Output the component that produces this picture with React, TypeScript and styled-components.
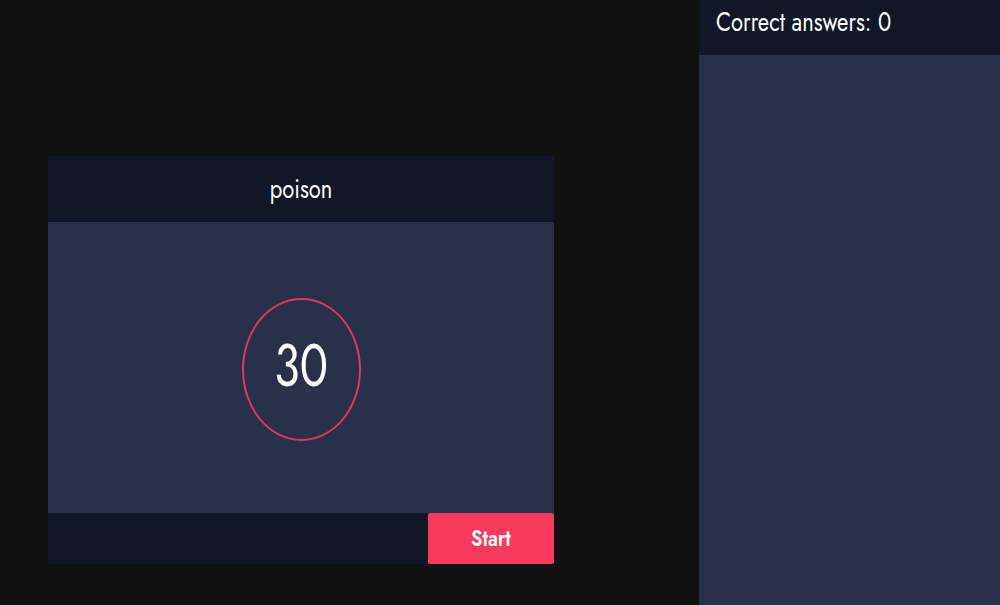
import React from "react";
import styled, { createGlobalStyle } from "styled-components";

const Global = createGlobalStyle`
  html, body { margin: 0; padding: 0; background: #111111; }
  body { font-family: "Jost", "Lato", "Liberation Sans", sans-serif; }
  * { box-sizing: border-box; }
`;

const Page = styled.div`
  display: flex;
  width: 1000px;
  height: 605px;
  background: #111111;
  overflow: hidden;
`;

const Main = styled.div`
  width: 699px;
  padding: 156px 145px 0 48px;
`;

const Card = styled.div`
  display: flex;
  flex-direction: column;
  width: 506px;
`;

const Tall = styled.span`
  display: inline-block;
  transform: scaleY(1.25);
  line-height: 1;
`;

const CardHeader = styled.div`
  height: 66px;
  background: #121728;
  color: #ffffff;
  display: flex;
  align-items: center;
  justify-content: center;
  font-size: 22px;
  padding-bottom: 2px;
`;

const CardBody = styled.div`
  height: 291px;
  background: #29304a;
  display: flex;
  align-items: center;
  justify-content: center;
  padding-top: 4px;
`;

const Timer = styled.div`
  width: 119px;
  height: 143px;
  border: 2px solid #e1385c;
  border-radius: 50%;
  display: flex;
  align-items: center;
  justify-content: center;
  color: #ffffff;
  font-size: 47px;
  font-weight: 400;
  padding-bottom: 6px;
`;

const CardFooter = styled.div`
  height: 51px;
  display: flex;
  background: #121728;
`;

const Input = styled.input`
  flex: 1;
  background: transparent;
  border: none;
  outline: none;
  color: #fff;
  font-family: inherit;
  font-size: 18px;
  padding: 0 16px;
`;

const StartButton = styled.button`
  width: 126px;
  height: 51px;
  border: none;
  border-radius: 2px;
  background: #f8385c;
  color: #ffffff;
  font-family: inherit;
  font-size: 19px;
  font-weight: 600;
  cursor: pointer;
  padding: 0 0 3px 0;
  display: flex;
  align-items: center;
  justify-content: center;
`;

const Side = styled.div`
  flex: 1;
  display: flex;
  flex-direction: column;
  background: #29304a;
`;

const SideHeader = styled.div`
  height: 55px;
  background: #121728;
  color: #ffffff;
  font-size: 22px;
  display: flex;
  align-items: center;
  padding: 0 0 13px 17px;
`;

export default function App() {
  return (
    <>
      <Global />
      <Page>
        <Main>
          <Card>
            <CardHeader>
              <Tall>poison</Tall>
            </CardHeader>
            <CardBody>
              <Timer>
                <Tall>30</Tall>
              </Timer>
            </CardBody>
            <CardFooter>
              <Input />
              <StartButton>
                <Tall>Start</Tall>
              </StartButton>
            </CardFooter>
          </Card>
        </Main>
        <Side>
          <SideHeader>
            <Tall>Correct answers: 0</Tall>
          </SideHeader>
        </Side>
      </Page>
    </>
  );
}
